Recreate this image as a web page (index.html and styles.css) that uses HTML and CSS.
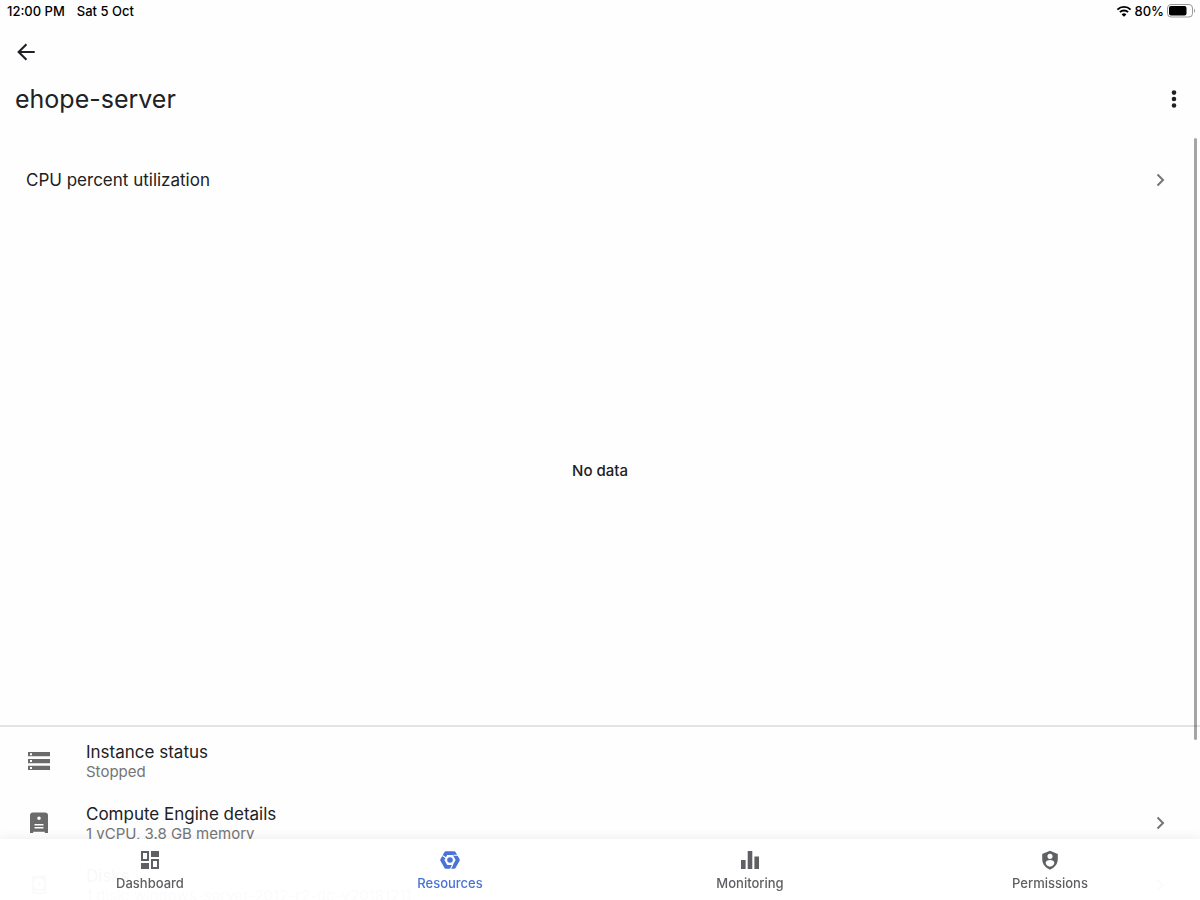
FILE: index.html
```html
<!DOCTYPE html>
<html lang="en">

<head>
    <meta charset="utf-8">
    <meta name="viewport" content="width=device-width, initial-scale=1">
    <title>ehope-server</title>
    <link rel="stylesheet" href="styles.css">
</head>

<body>
    <!--Status bar-->
    <div class="status-bar">
        <span>12:00 PM</span>
        <span>Sat 5 Oct</span>
        <div class="status-right">
            <svg class="wifi" viewBox="0 0 16 12" aria-hidden="true">
                <path d="M1.4 4.6a9.4 9.4 0 0 1 13.2 0M3.9 7.1a5.9 5.9 0 0 1 8.2 0" fill="none" stroke="#000" stroke-width="1.9"/>
                <path d="M8 11.8 5.6 9.4a3.4 3.4 0 0 1 4.8 0z"/>
            </svg>
            <span>80%</span>
            <svg class="battery" viewBox="0 0 28 14" aria-hidden="true">
                <rect x=".5" y=".5" width="25" height="12.5" rx="3.5" fill="none" stroke="#999"/>
                <rect x="2" y="2" width="17.5" height="9.5" rx="2"/>
                <path d="M27 4.8c1.2.8 1.2 3.2 0 4z" fill="#888"/>
            </svg>
        </div>
    </div>

    <!--Header-->
    <header class="header">
        <button class="icon-btn" type="button" aria-label="Back">
            <svg viewBox="0 0 24 24"><path d="M21.500 12H4.500M12.500 3.500 4 12l8.500 8.500" fill="none" stroke="currentColor" stroke-width="2.300"/></svg>
        </button>
        <div class="title-row">
            <h1>ehope-server</h1>
            <button class="icon-btn" type="button" aria-label="More options">
                <svg viewBox="0 0 24 24"><circle cx="12" cy="5" r="2.500"/><circle cx="12" cy="12" r="2.500"/><circle cx="12" cy="19" r="2.500"/></svg>
            </button>
        </div>
    </header>

    <main class="content">
        <section class="chart">
            <a class="chart-link" href="#">
                <span>CPU percent utilization</span>
                <svg class="chevron" viewBox="0 0 12 16" aria-hidden="true"><path d="m2.500 2.500 5.500 5.500-5.500 5.500"/></svg>
            </a>
            <p class="no-data">No data</p>
        </section>

        <ul class="list">
            <li class="row">
                <svg class="row-icon" viewBox="0 0 22 22" aria-hidden="true">
                    <path fill-rule="evenodd" d="M0 2h22v4.300H0zM2 3.200v2h2v-2zM0 8.900h22v4.300H0zM2 10v2h2v-2zM0 15.700h22V20H0zM2 16.900v2h2v-2z"/>
                </svg>
                <div class="row-text">
                    <p class="row-title">Instance status</p>
                    <p class="row-sub">Stopped</p>
                </div>
            </li>
            <li>
                <a class="row" href="#">
                    <svg class="row-icon" viewBox="0 0 22 22" aria-hidden="true">
                        <path fill-rule="evenodd" d="M5 .500h12a3 3 0 0 1 3 3V21h-3.200v-1.200H5.200V21H2V3.500a3 3 0 0 1 3-3zM11 4.500a1.800 1.800 0 1 0 0 3.600 1.800 1.800 0 0 0 0-3.600zM6.500 12v1.400h9V12zM6.500 15v1.400h9V15z"/>
                    </svg>
                    <div class="row-text">
                        <p class="row-title">Compute Engine details</p>
                        <p class="row-sub">1 vCPU, 3.8 GB memory</p>
                    </div>
                    <svg class="chevron" viewBox="0 0 12 16" aria-hidden="true"><path d="m2.500 2.500 5.500 5.500-5.500 5.500"/></svg>
                </a>
            </li>
            <li>
                <a class="row" href="#">
                    <svg class="row-icon" viewBox="0 0 24 24" aria-hidden="true">
                        <path fill-rule="evenodd" d="M6 2h12a2 2 0 0 1 2 2v16a2 2 0 0 1-2 2H6a2 2 0 0 1-2-2V4a2 2 0 0 1 2-2zM12 4.500a6 6 0 1 0 0 12 6 6 0 0 0 0-12zM12 9a1.500 1.500 0 1 1 0 3 1.500 1.500 0 0 1 0-3zM6 18.500V20h12v-1.500z"/>
                    </svg>
                    <div class="row-text">
                        <p class="row-title">Disks</p>
                        <p class="row-sub">1 disk: windows-server-2012-r2-dc-v20181211</p>
                    </div>
                    <svg class="chevron" viewBox="0 0 12 16" aria-hidden="true"><path d="m2.500 2.500 5.500 5.500-5.500 5.500"/></svg>
                </a>
            </li>
        </ul>
    </main>
    <div class="scrollbar"></div>

    <!--Bottom tabs-->
    <nav class="tabs">
        <a class="tab" href="#">
            <svg viewBox="0 0 22 22" aria-hidden="true">
                <path fill-rule="evenodd" d="M2 2h8v10H2zM4 4v6h4V4zM12 2h8v6h-8zM2 14h8v6H2zM12 10h8v10h-8zM14 12v6h4v-6z"/>
            </svg>
            <span>Dashboard</span>
        </a>
        <a class="tab active" href="#" aria-current="page">
            <svg viewBox="0 0 22 22" aria-hidden="true">
                <path fill-rule="evenodd" d="M6.800 2.200h8.400a1.500 1.500 0 0 1 1.300.7l4.100 7.300a1.500 1.500 0 0 1 0 1.600l-4.100 7.300a1.500 1.500 0 0 1-1.300.7H6.800a1.500 1.500 0 0 1-1.300-.7l-4.100-7.300a1.500 1.500 0 0 1 0-1.600l4.100-7.300a1.500 1.500 0 0 1 1.300-.7zM8.200 6.100 5.400 11l2.800 4.900h5.600l2.800-4.900-2.800-4.900z"/>
                <path d="m3.300 6.500 3.500 2.200M19 6.300h-4.600M11.500 20l2.300-4.500" fill="none" stroke="#fff" stroke-width="1.100"/>
                <circle cx="11" cy="11" r="2.800"/>
            </svg>
            <span>Resources</span>
        </a>
        <a class="tab" href="#">
            <svg viewBox="0 0 22 22" aria-hidden="true">
                <path d="M2 11h4.600v9H2zM8.700 2h4.600v18H8.700zM15.400 7.500H20V20h-4.600z"/>
            </svg>
            <span>Monitoring</span>
        </a>
        <a class="tab" href="#">
            <svg viewBox="0 0 24 24" aria-hidden="true">
                <path fill-rule="evenodd" d="M12 2l8.500 3.500V11c0 5.500-3.600 9.800-8.500 11.500C7.100 20.800 3.500 16.500 3.500 11V5.500zM12 5.200a2.800 2.800 0 1 0 0 5.600 2.800 2.800 0 0 0 0-5.600zM12 12c-2.500 0-4.700 1-4.700 3 0 2.300 2.700 4.300 4.700 4.300s4.700-2 4.700-4.300c0-2-2.200-3-4.700-3z"/>
            </svg>
            <span>Permissions</span>
        </a>
    </nav>
</body>

</html>
```
FILE: styles.css
```css
*,
*:before,
*:after {
    padding: 0;
    margin: 0;
    box-sizing: border-box;
}

body {
    height: 100vh;
    display: flex;
    flex-direction: column;
    overflow: hidden;
    background: #fefefe;
    color: #202124;
    font-family: Inter, "Liberation Sans", sans-serif;
}

a {
    color: inherit;
    text-decoration: none;
}

ul {
    list-style: none;
}

.status-bar {
    display: flex;
    align-items: center;
    gap: 12px;
    height: 22px;
    padding: 0 5px 0 7px;
    color: #000;
    font-size: 13px;
    font-weight: 500;
}

.status-right {
    display: flex;
    align-items: center;
    gap: 3px;
    margin-left: auto;
}

.wifi {
    width: 16px;
    height: 12px;
}

.battery {
    width: 28px;
    height: 14px;
}

.header {
    flex: none;
    padding: 19px 15px 16px;
}

.icon-btn {
    display: block;
    width: 22px;
    height: 22px;
    border: 0;
    background: none;
    color: #202124;
    cursor: pointer;
}

.icon-btn svg {
    display: block;
    width: 22px;
    height: 22px;
    fill: currentColor;
}

.title-row {
    display: flex;
    align-items: center;
    justify-content: space-between;
    margin-top: 20px;
}

h1 {
    font-size: 25px;
    font-weight: 400;
    line-height: 32px;
}

.content {
    flex: 1;
    min-height: 0;
    overflow: hidden;
}

.chart {
    display: flex;
    flex-direction: column;
    height: 596px;
    border-bottom: 2px solid #e4e4e4;
}

.chart-link {
    display: flex;
    align-items: center;
    justify-content: space-between;
    padding: 37px 33px 0 26px;
    font-size: 17px;
    line-height: 24px;
}

.chevron {
    flex: none;
    width: 12px;
    height: 16px;
    fill: none;
    stroke: #757575;
    stroke-width: 2;
}

.no-data {
    margin: auto;
    padding-top: 24px;
    font-size: 15px;
    font-weight: 500;
    line-height: 20px;
}

.list {
    padding-top: 4px;
}

.row {
    display: flex;
    align-items: center;
    height: 62px;
    padding: 0 33px 0 28px;
}

.row .chevron,
.row-icon {
    margin-bottom: 3px;
}

.row-icon {
    flex: none;
    width: 22px;
    height: 22px;
    margin-right: 36px;
    fill: #6b6b6b;
}

.row-text {
    flex: 1;
}

.row-title {
    font-size: 17px;
    line-height: 20px;
}

.row-sub {
    color: #757575;
    font-size: 15px;
    line-height: 20px;
}

.scrollbar {
    position: absolute;
    top: 138px;
    right: 3px;
    bottom: 160px;
    width: 3px;
    border-radius: 2px;
    background: rgba(0, 0, 0, 0.35);
}

.tabs {
    position: fixed;
    left: 0;
    right: 0;
    bottom: 0;
    display: flex;
    height: 61px;
    background: rgba(255, 255, 255, 0.97);
    box-shadow: 0 -2px 10px rgba(0, 0, 0, 0.06);
}

.tab {
    flex: 1;
    display: flex;
    flex-direction: column;
    align-items: center;
    padding-top: 10px;
    color: #5f6063;
    font-size: 13px;
    font-weight: 500;
    line-height: 16px;
}

.tab svg {
    width: 22px;
    height: 22px;
    margin-bottom: 4px;
    fill: currentColor;
}

.tab.active {
    color: #4a72d8;
}
```
